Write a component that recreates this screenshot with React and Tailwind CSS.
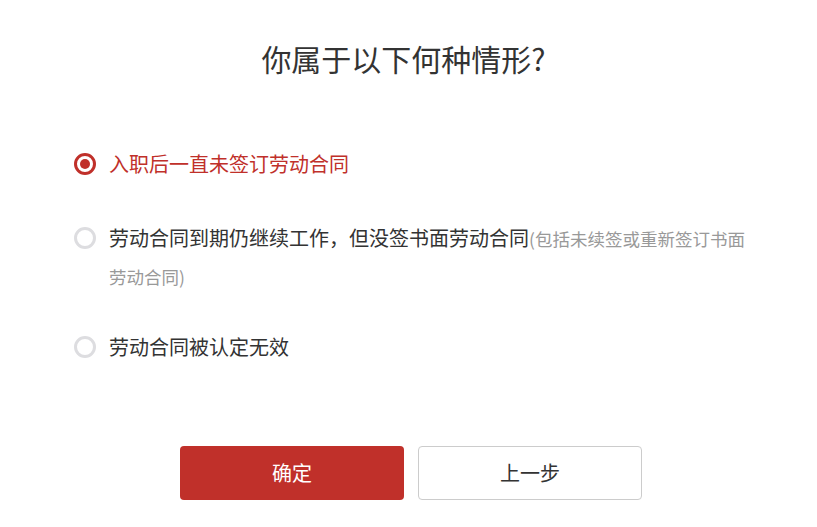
import React, { useState } from 'react';

const options = [
  { id: 1, label: '入职后一直未签订劳动合同', gap: 'mb-[37px]' },
  { id: 2, label: '劳动合同到期仍继续工作，但没签书面劳动合同', note: '(包括未续签或重新签订书面劳动合同)', gap: 'mb-[33px]' },
  { id: 3, label: '劳动合同被认定无效', gap: '' },
];

const Radio = ({ checked }) => (
  <span
    className={`mt-[7.5px] flex h-[22px] w-[22px] shrink-0 items-center justify-center rounded-full border-[3px] ${
      checked ? 'border-[#c0302a]' : 'border-[#dddde0]'
    }`}
  >
    {checked && <span className="h-[10px] w-[10px] rounded-full bg-[#c0302a]" />}
  </span>
);

const App = () => {
  const [selected, setSelected] = useState(1);

  return (
    <div
      className="w-[817px] h-[527px] bg-white text-[#333]"
      style={{ fontFamily: '"Noto Sans CJK SC", "Noto Sans", sans-serif' }}
    >
      {/* Title */}
      <h2 className="pt-[38px] pr-[10px] text-center text-[30px] leading-[40px] font-normal text-[#333]">
        你属于以下何种情形?
      </h2>

      {/* Options */}
      <div className="mt-[67px] flex flex-col pl-[74px] pr-[60px]">
        {options.map((opt) => {
          const active = selected === opt.id;
          return (
            <label
              key={opt.id}
              onClick={() => setSelected(opt.id)}
              className={`flex cursor-pointer items-start gap-[13px] ${opt.gap}`}
            >
              <Radio checked={active} />
              <span
                className={`text-[20px] leading-[37px] ${active ? 'text-[#c0302a]' : 'text-[#333]'}`}
              >
                {opt.label}
                {opt.note && <span className="text-[17.5px] text-[#999]">{opt.note}</span>}
              </span>
            </label>
          );
        })}
      </div>

      {/* Buttons */}
      <div className="mt-[81px] flex justify-center gap-[14px] pl-[5px]">
        <button className="h-[54px] w-[224px] rounded-[4px] bg-[#c0302a] text-[20px] text-white">
          确定
        </button>
        <button className="h-[54px] w-[224px] rounded-[4px] border border-[#ccc] bg-white text-[20px] text-[#333]">
          上一步
        </button>
      </div>
    </div>
  );
};

export default App;
